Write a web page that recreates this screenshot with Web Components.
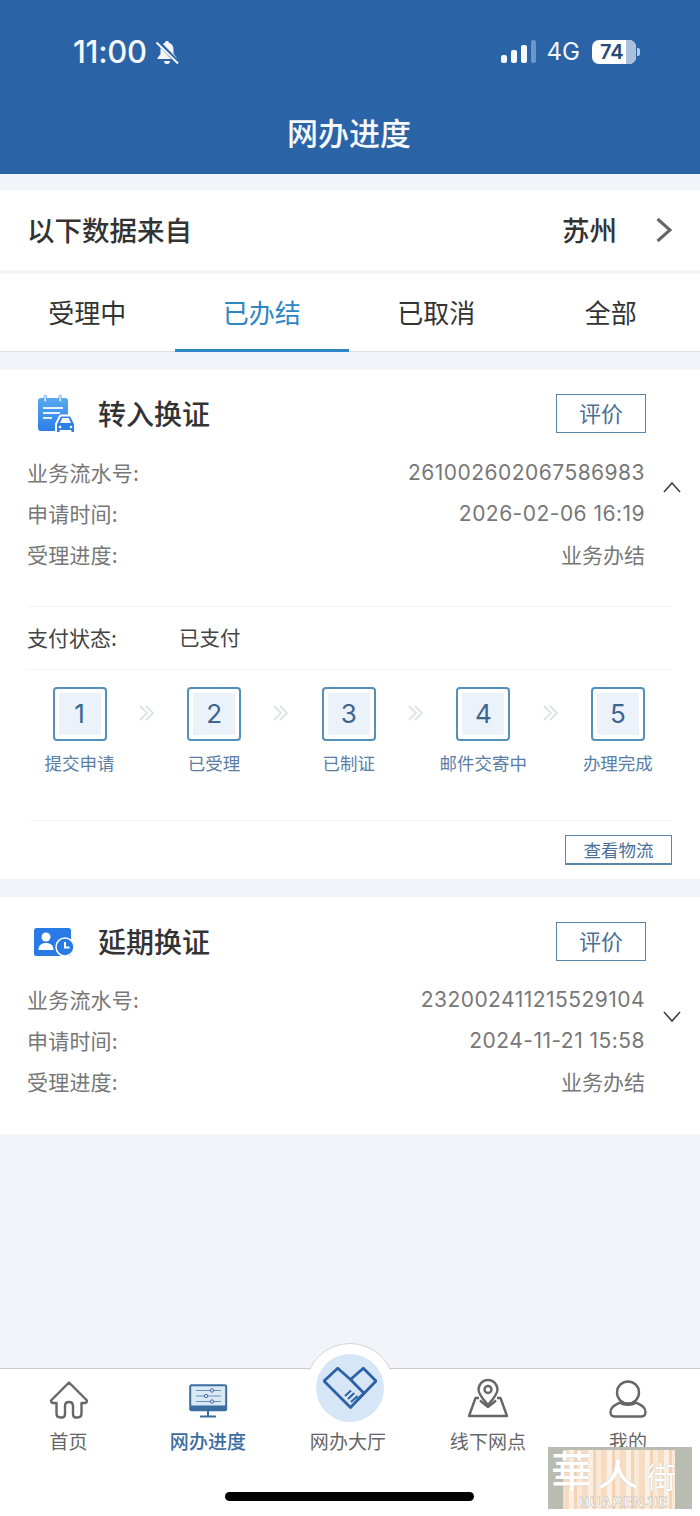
<!DOCTYPE html>
<html lang="zh"><head><meta charset="utf-8"><style>
html,body{margin:0;padding:0;background:#f3f4f9}
body{width:700px;height:1516px;overflow:hidden;font-family:"Noto Sans CJK SC","Liberation Sans",sans-serif}
</style></head><body>
<app-page></app-page>
<script>
const FONT='"Noto Sans CJK SC","Noto Sans",sans-serif';
const def=(n,html)=>customElements.define(n,class extends HTMLElement{
  connectedCallback(){if(this.shadowRoot)return;const r=this.attachShadow({mode:'open'});
  const a={};for(const x of this.attributes)a[x.name]=x.value;r.innerHTML=typeof html==='function'?html(a):html;}
});
const ICON={
home:`<svg style="margin-bottom:-2px" width="40" height="40" viewBox="0 0 40 40" fill="none" stroke="#666" stroke-width="2.4" stroke-linejoin="round" stroke-linecap="round"><path d="M20 2.500 2 20.500q0 1.600 1.500 2.500H7.500V33.500q0 4 4 4h1.500q3 0 3-3.500V26q0-4 4-4t4 4v8q0 3.500 3 3.500h1.500q4 0 4-4V23h4q1.500-.9 1.500-2.500Z"/></svg>`,
monitor:`<svg style="margin-left:2px" width="40" height="34" viewBox="0 0 40 34" fill="none"><rect x="1.200" y="1.200" width="36" height="25" rx="1.500" fill="#dbe9f7" stroke="#3d6c9f" stroke-width="2"/><path d="M1 21.500H38V24q0 3-3 3H4q-3 0-3-3Z" fill="#3d6c9f"/><path d="M19 27v5M11 32.500h16" stroke="#3d6c9f" stroke-width="2"/><path d="M7 6.500H32M7 12H32M7 17.500H32" stroke="#6b8fb5" stroke-width="1"/><circle cx="23" cy="6.500" r="1.700" fill="#dbe9f7" stroke="#3d6c9f"/><circle cx="17" cy="12" r="1.700" fill="#dbe9f7" stroke="#3d6c9f"/><circle cx="23" cy="17.500" r="1.700" fill="#dbe9f7" stroke="#3d6c9f"/></svg>`,
pin:`<svg width="42" height="40" viewBox="0 0 42 40" fill="none" stroke="#666" stroke-width="2.400" stroke-linejoin="round"><path d="M21 27C16 21 11.500 16.500 11.500 11.500a9.500 9.500 0 0 1 19 0C30.500 16.500 26 21 21 27Z"/><circle cx="21" cy="11.500" r="3.500"/><path d="M12 20H8.500L2 38H40L33.500 20H30M13 22.500 21 29 29 22.500"/></svg>`,
user:`<svg width="38" height="38" viewBox="0 0 38 38" fill="none" stroke="#666" stroke-width="2.400" stroke-linejoin="round"><circle cx="19" cy="12.500" r="11"/><path d="M11 22.500C6 25 1.500 27 1.500 32q0 4.500 4 4.500h27q4 0 4-4.500c0-5-4.500-7-9.500-9.500-3 3-13 3-16 0Z"/></svg>`,
hall:`<svg width="54" height="42" viewBox="0 0 54 42" fill="none" stroke="#2b62a5" stroke-linejoin="round"><path d="M1 14 14.700 1.200 27.500 12.500 40.300 1.200 53 14 27.500 40.500Z" stroke-width="2.800"/><path d="M27.500 12.500 41 26.300 34 33" stroke-width="2.800"/><path d="M22 29 28 23.500M25 32 31.300 26M28 35 34.500 29" stroke-width="2"/></svg>`
};
def('status-bar',`<style>:host{display:flex;align-items:center;height:26px;padding:39px 60px 0 73px;color:#f4f8fc;font-family:"Inter","Liberation Sans",sans-serif}
.t{font-size:31px;font-weight:500;letter-spacing:-.3px;line-height:26px}.s{flex:1}.g{font-size:24px;margin:0 12px 0 10px;line-height:26px}
.b{position:relative;width:44px;height:24px;border-radius:7px;background:#fff;color:#2a4a75;font-size:20px;font-weight:600;line-height:24px;text-indent:8px;overflow:hidden}.b i{position:absolute;right:0;top:0;bottom:0;width:10px;background:#a9bfdb}
.n{width:3px;height:8px;background:#b5cbe5;border-radius:0 2px 2px 0;margin-left:1px}</style>
<span class="t">11:00</span>
<svg style="margin-left:7px" width="26" height="26" viewBox="0 0 26 26" fill="#f4f8fc"><path d="M13 2c1.200 0 1.800.7 2 1.700 3 1 4.500 3.500 4.500 7v4l3 4v1.300H3.500V19l3-4v-4.300c0-3.500 1.500-6 4.500-7C11.200 2.700 11.800 2 13 2Z"/><path d="M10 22h6a3 3 0 0 1-6 0Z"/><path d="M3 2 25 25" stroke="#2b63a7" stroke-width="4.500"/><path d="M2.500 3.500 24 24.500" stroke="#f4f8fc" stroke-width="2"/></svg>
<span class="s"></span>
<svg width="36" height="24" viewBox="0 0 36 24"><rect x="0" y="15" width="6" height="8" rx="2" fill="#f4f8fc"/><rect x="10" y="10" width="6" height="13" rx="2" fill="#f4f8fc"/><rect x="20" y="5" width="6" height="18" rx="2" fill="#f4f8fc"/><rect x="30" y="0" width="5" height="23" rx="2" fill="#6d97c8"/></svg>
<span class="g">4G</span><span class="b">74<i></i></span><span class="n"></span>`);
def('app-header',`<style>:host{display:block;height:174px;background:#2b63a7;box-sizing:border-box;color:#f6f9fd}
h1{margin:44px 0 0;padding-right:2px;text-align:center;font:500 31px/46px ${FONT}}</style><status-bar></status-bar><h1>网办进度</h1>`);
def('city-row',`<style>:host{display:flex;align-items:center;height:80px;margin-top:16px;background:#fff;padding:0 27px 2px 27px;box-sizing:border-box;color:#333;font:500 27.500px/40px ${FONT}}
.s{flex:1}svg{margin-left:38px;margin-top:1px}</style><span>以下数据来自</span><span class="s"></span><span>苏州</span>
<svg width="18" height="26" viewBox="0 0 18 26" fill="none" stroke="#666" stroke-width="3"><path d="M2.500 2 15 13 2.500 24"/></svg>`);
def('tab-bar',`<style>:host{display:grid;grid-template-columns:repeat(4,1fr);height:78px;margin-top:4px;background:#fff;border-bottom:1px solid #dcdfe4;box-sizing:border-box;font:400 26px/38px ${FONT};color:#333;text-align:center;padding-right:2px}
div{padding-top:19px;box-sizing:border-box;height:78px}.a{color:#2e86c4;border-bottom:3px solid #2e86c4}</style>
<div>受理中</div><div class="a">已办结</div><div>已取消</div><div>全部</div>`);
def('card-head',a=>`<style>:host{display:flex;align-items:center;height:39px;color:#333}
.i{width:71px;display:flex;flex:none}h2{margin:0;flex:1;font:500 28px/39px ${FONT}}
button{width:90px;height:39px;box-sizing:border-box;border:1.500px solid #5b86a8;background:#fff;color:#4a6f96;font:400 22px/30px ${FONT};padding:0 0 3px;border-radius:0}</style>
<span class="i"><slot></slot></span><h2>${a.title}</h2><button>评价</button>`);
def('info-row',a=>`<style>:host{display:flex;justify-content:space-between;height:41px;color:#777;font:400 21px/41px ${FONT}}
.k{letter-spacing:.2px}.v{letter-spacing:${a.plain!==undefined?'0':'.47px'};${a.plain!==undefined?'':'font-family:"Inter",sans-serif;'}color:#777}</style><span class="k">${a.k}</span><span class="v">${a.v}</span>`);
def('info-block',a=>`<style>:host{display:block;position:relative;padding:0 55px 0 0;margin-top:${a.mt||'18px'}}
svg{position:absolute;right:19px;top:${a.top};}</style><slot></slot>
<svg width="18" height="12" viewBox="0 0 18 12" fill="none" stroke="#444" stroke-width="1.700"><path d="${a.up!==undefined?'M1 11 9 2 17 11':'M1 1 9 10 17 1'}"/></svg>`);
def('step-item',a=>`<style>:host{display:flex;flex-direction:column;align-items:center;width:108px;flex:none}
.b{width:54px;height:54px;box-sizing:border-box;border:2px solid #5590ba;border-radius:4px;background:#fff;padding:4px}
.n{width:100%;height:100%;background:#ecf2fa;color:#3c6592;display:flex;align-items:center;justify-content:center;font:400 26px/1 "Inter",sans-serif}
.l{margin-top:9px;color:#5a7ea6;font:400 17.500px/26px ${FONT};white-space:nowrap}</style><div class="b"><div class="n">${a.n}</div></div><div class="l">${a.l}</div>`);
def('step-arrow',`<style>:host{display:block;width:26.600px;height:53px;flex:none}svg{display:block;margin:18px auto 0}</style>
<svg width="16" height="16" viewBox="0 0 16 16" fill="none" stroke="#dfe2e6" stroke-width="1.800"><path d="M1 1 8 8 1 15M7 1 14 8 7 15"/></svg>`);
def('steps-flow',`<style>:host{display:flex;padding:17px 0 0 25.500px}</style>
<step-item n="1" l="提交申请"></step-item><step-arrow></step-arrow>
<step-item n="2" l="已受理"></step-item><step-arrow></step-arrow>
<step-item n="3" l="已制证"></step-item><step-arrow></step-arrow>
<step-item n="4" l="邮件交寄中"></step-item><step-arrow></step-arrow>
<step-item n="5" l="办理完成"></step-item>`);
def('case-card',`<style>:host{display:block;background:#fff;padding:24px 0 0 27px;box-sizing:border-box}
.wrap{padding-right:54px}</style><div class="wrap"><slot name="head"></slot></div><slot></slot>`);
def('expand-detail',`<style>:host{display:block;margin-top:31px;padding-right:28px}
.pay{display:flex;height:64px;padding-bottom:2px;align-items:center;border-top:1px solid #f1f2f4;border-bottom:1px solid #f1f2f4;color:#444;font:400 21px/30px ${FONT};box-sizing:border-box}
.pay b{font-weight:400;width:152px}.pay span{font-size:20.500px}.foot{margin-top:44px;margin-left:4px;border-top:1px solid #f1f2f4;display:flex;justify-content:flex-end;padding-top:14px}
button{width:107px;height:30px;box-sizing:border-box;border:1.500px solid #5b86a8;border-bottom-width:2px;background:#fff;color:#4a6f96;font:400 17.500px/26px ${FONT};padding:0}</style>
<div class="pay"><b>支付状态:</b><span>已支付</span></div><steps-flow style="margin-left:-27px"></steps-flow>
<div class="foot"><button>查看物流</button></div>`);
def('nav-item',a=>`<style>:host{display:flex;flex-direction:column;align-items:center;flex:none;color:${a.on!==undefined?'#3d6c9f':'#666'};font:${a.on!==undefined?500:400} 19px/28px ${FONT}}
.i{height:44px;display:flex;align-items:flex-end;justify-content:center}span{margin-top:9px;letter-spacing:.1px}</style>
<div class="i"><slot></slot></div><span>${a.l}</span>`);
def('tab-nav',`<style>:host{display:block;position:relative;height:148px;background:#fff;border-top:1px solid #c9ccd2;box-sizing:border-box}
.row{display:flex;padding-top:5px}
.hub{position:absolute;left:305px;top:-26px;width:90px;height:27px;overflow:hidden}
.hub i{display:block;width:90px;height:90px;border-radius:50%;background:#fff;border:1px solid #d0d3d8;box-sizing:border-box}
.c{position:absolute;left:316px;top:-15px;width:68px;height:68px;border-radius:50%;background:#d7e6f7;display:flex;align-items:center;justify-content:center}
.home{position:absolute;left:225px;top:123px;width:249px;height:9px;background:#000;border-radius:5px}</style>
<div class="hub"><i></i></div><div class="c"><slot name="hub"></slot></div>
<div class="row"><slot></slot></div><div class="home"></div>`);
def('water-mark',`<style>:host{position:absolute;left:548px;top:1447px;width:144px;height:62px;background:#b9bcb1;display:block}
.p{position:absolute;left:15px;top:3px;width:112px;height:59px;background:repeating-linear-gradient(90deg,#f7dcc4 0 6px,#fcf0e4 6px 11px,#f5d3b5 11px 14px,#fbe8d6 14px 19px)}
.z{position:absolute;top:0;color:#fff;white-space:nowrap;font-family:"Noto Sans CJK TC",sans-serif;font-weight:500;text-shadow:0 0 1px #a7a89e}
.e{position:absolute;left:31px;top:48px;font:700 14px/14px "Liberation Sans",sans-serif;letter-spacing:1px;color:#fff;white-space:nowrap;-webkit-text-stroke:.4px #a3a59b}</style>
<div class="p"></div>
<span class="z" style="left:3px;font-size:42px;line-height:44px">華</span>
<span class="z" style="left:48px;top:8px;font-size:44px;line-height:36px;transform:scaleY(.7)">人</span>
<span class="z" style="left:98px;top:12px;font-size:30px;line-height:32px;font-weight:400">街</span>
<span class="e">HUARENJIE</span>`);
const car=`<svg style="margin-left:9px" width="40" height="40" viewBox="0 0 40 40"><defs><linearGradient id="g" x1="0" y1="0" x2="0" y2="1"><stop offset="0" stop-color="#5aa8f0"/><stop offset="1" stop-color="#2a7fe8"/></linearGradient></defs><rect x="2" y="4" width="30" height="33" rx="3" fill="url(#g)"/><rect x="8" y="1" width="2.500" height="7" rx="1.200" fill="#cfe6fa" stroke="#4a9cea" stroke-width=".6"/><rect x="23" y="1" width="2.500" height="7" rx="1.200" fill="#cfe6fa" stroke="#4a9cea" stroke-width=".6"/><path d="M7 14H27M7 19H24M7 24H16" stroke="#e6f2fd" stroke-width="2"/><path d="M20 39v-9l3.500-7q.5-1.500 2-1.500h8q1.500 0 2 1.500l3.500 7v9h-4.500v-2h-10v2Z" fill="#2d80e6" stroke="#fff" stroke-width="2" stroke-linejoin="round"/><path d="M24 29l2.300-5h6.400l2.300 5Z" fill="#fff"/><circle cx="24" cy="33" r="1.300" fill="#fff"/><circle cx="35" cy="33" r="1.300" fill="#fff"/></svg>`;
const idc=`<svg style="margin-left:7px" width="41" height="30" viewBox="0 0 41 30"><rect x="0" y="1" width="37" height="28" rx="2.500" fill="#2a7ae6"/><circle cx="12" cy="10" r="4.500" fill="#fff"/><path d="M4.500 23c0-5 3-7 7.500-7s7.500 2 7.500 7Z" fill="#fff"/><circle cx="31" cy="20" r="9" fill="#2a7ae6" stroke="#fff" stroke-width="1.500"/><path d="M31 15v5.500h4.500" fill="none" stroke="#fff" stroke-width="2"/></svg>`;
def('app-page',`<style>:host{display:block;width:700px;height:1516px;position:relative;background:#f3f4f9}
.a{margin-top:18px;height:509px}.b{margin-top:18px;height:237px}.sp{height:234px}.h2{margin-top:1px}</style>
<app-header></app-header><city-row></city-row><tab-bar></tab-bar>
<case-card class="a">
 <card-head slot="head" title="转入换证">${car}</card-head>
 <info-block top="29px" up="" mt="19px"><info-row k="业务流水号:" v="261002602067586983"></info-row><info-row k="申请时间:" v="2026-02-06 16:19"></info-row><info-row k="受理进度:" v="业务办结" plain=""></info-row></info-block>
 <expand-detail></expand-detail>
</case-card>
<case-card class="b">
 <card-head class="h2" slot="head" title="延期换证">${idc}</card-head>
 <info-block top="32px" mt="18px"><info-row k="业务流水号:" v="232002411215529104"></info-row><info-row k="申请时间:" v="2024-11-21 15:58"></info-row><info-row k="受理进度:" v="业务办结" plain=""></info-row></info-block>
</case-card>
<div class="sp"></div>
<tab-nav><span slot="hub" style="display:flex">${ICON.hall}</span>
<nav-item l="首页" style="width:137px">${ICON.home}</nav-item>
<nav-item l="网办进度" on="" style="width:142px">${ICON.monitor}</nav-item>
<nav-item l="网办大厅" style="width:138px"></nav-item>
<nav-item l="线下网点" style="width:142px">${ICON.pin}</nav-item>
<nav-item l="我的" style="width:138px">${ICON.user}</nav-item></tab-nav>
<water-mark></water-mark>`);
</script></body></html>
